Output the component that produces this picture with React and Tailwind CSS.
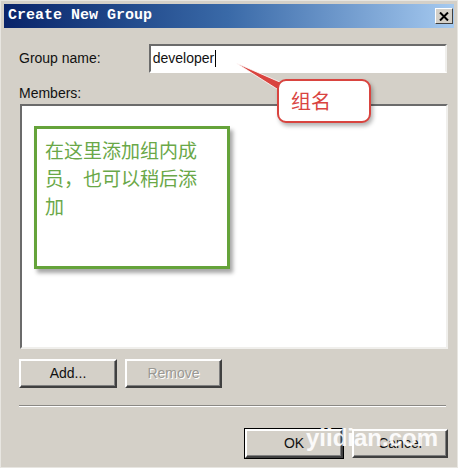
import React from 'react';

const sans = { fontFamily: '"Liberation Sans", Arial, sans-serif' };
const cjk = { fontFamily: '"Noto Sans CJK SC", "Noto Sans", sans-serif' };

function ClassicButton({ children, width, disabled, isDefault }) {
  return (
    <button
      className={`h-[29px] ${width} bg-[#d4d0c8] border-2 border-t-white border-l-white border-b-[#404040] border-r-[#404040] shadow-[inset_-1px_-1px_0_#808080] text-[14px] flex items-center justify-center ${
        disabled ? 'text-[#9a9893] [text-shadow:1px_1px_0_#ffffff]' : 'text-[#111]'
      } ${isDefault ? 'outline outline-1 outline-black' : ''}`}
      style={sans}
    >
      {children}
    </button>
  );
}

export default function App() {
  return (
    <div className="relative w-[458px] h-[468px] bg-[#d4d0c8] p-[3px] border border-[#e8e6e1] overflow-hidden" style={sans}>
      {/* Title bar */}
      <div className="h-[24px] flex items-center justify-between pl-[4px] pr-[1px] bg-gradient-to-r from-[#0a246a] via-[#3a6aa8] to-[#a6caf0]">
        <span className="text-white text-[15px] font-bold tracking-[0px]" style={{ fontFamily: '"Liberation Mono", "Courier New", monospace' }}>
          Create New Group
        </span>
        <div className="w-[18px] h-[16px] bg-[#d4d0c8] border border-t-white border-l-white border-b-[#404040] border-r-[#404040] flex items-center justify-center">
          <svg width="10" height="9" viewBox="0 0 10 9">
            <path d="M1 0.5 L9 8.5 M9 0.5 L1 8.5" stroke="#000" strokeWidth="2" />
          </svg>
        </div>
      </div>

      <div className="pl-[15px] pr-[7px]">
        {/* Group name row */}
        <div className="mt-[16px] h-[29px] flex items-center">
          <span className="w-[130px] text-[14px] text-[#111]">Group name:</span>
          <div className="w-[299px] h-[29px] bg-white border-2 border-t-[#6b6b6b] border-l-[#6b6b6b] border-b-white border-r-[#f0efec] flex items-center pl-[2px] text-[14px] text-[#111]">
            developer<span className="inline-block w-[1px] h-[17px] bg-black ml-[1px]" />
          </div>
        </div>

        {/* Members */}
        <div className="mt-[10px] h-[20px] leading-[20px] text-[14px] text-[#111]">Members:</div>
        <div className="relative mt-[1px] ml-[1px] w-[428px] h-[245px] bg-white border-2 border-t-[#6b6b6b] border-l-[#6b6b6b] border-b-[#f0efec] border-r-[#f0efec]">
          <div className="absolute left-[12px] top-[20px] w-[196px] h-[143px] border-[3px] border-[#65a33a] bg-white shadow-[3px_4px_4px_rgba(0,0,0,0.35)] pl-[8px] pt-[7px]">
            <p className="w-[160px] text-[19px] leading-[28px] text-[#6aa848]" style={cjk}>
              在这里添加组内成员，也可以稍后添加
            </p>
          </div>
        </div>

        {/* Add / Remove */}
        <div className="mt-[10px] flex gap-[8px]">
          <ClassicButton width="w-[98px]">Add...</ClassicButton>
          <ClassicButton width="w-[97px]" disabled>Remove</ClassicButton>
        </div>

        {/* Separator */}
        <div className="mt-[17px] w-[427px] h-[2px] border-t border-t-[#8a8884] border-b border-b-white" />

        {/* OK / Cancel */}
        <div className="mt-[22px] flex justify-end gap-[9px] -mr-[1px]">
          <ClassicButton width="w-[98px]" isDefault>OK</ClassicButton>
          <ClassicButton width="w-[96px]">Cancel</ClassicButton>
        </div>
      </div>

      {/* Red callout */}
      <svg className="absolute left-0 top-0 pointer-events-none" width="458" height="468">
        <polygon points="235,62 281,82 284,93" fill="#d9443f" stroke="#fff" strokeWidth="0.8" />
      </svg>
      <div className="absolute left-[276px] top-[78px] w-[94px] h-[44px] rounded-[9px] border-2 border-[#d9443f] bg-white shadow-[2px_3px_4px_rgba(0,0,0,0.3)] flex items-center pl-[12px]">
        <span className="text-[20px] text-[#d9443f]" style={cjk}>组名</span>
      </div>

      {/* Watermark */}
      <div className="absolute left-[305px] top-[419px] text-[24px] font-bold text-white/90 tracking-[0px]" style={sans}>
        yiidian.com
      </div>
    </div>
  );
}
